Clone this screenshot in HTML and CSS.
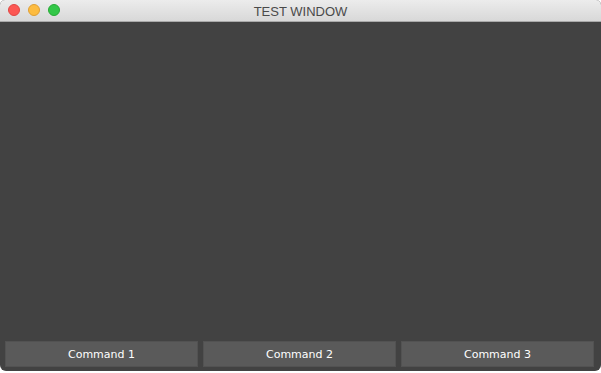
FILE: index.html
```html
<!DOCTYPE html>
<html lang="en">

<head>
    <meta charset="UTF-8">
    <meta name="viewport" content="width=device-width, initial-scale=1.0">
    <title>Test Window</title>
    <link rel="stylesheet" href="styles.css">
</head>

<body>
    <div class="window">
        <div class="titlebar">
            <div class="lights">
                <span class="light red"></span>
                <span class="light yellow"></span>
                <span class="light green"></span>
            </div>
            <div class="title">TEST WINDOW</div>
        </div>
        <div class="content"></div>
        <div class="commands">
            <button class="command">Command 1</button>
            <button class="command">Command 2</button>
            <button class="command">Command 3</button>
        </div>
    </div>
</body>

</html>
```

FILE: styles.css
```css
* {
    box-sizing: border-box;
}

body,
html {
    margin: 0;
    background-color: #ffffff;
}

.window {
    width: 601px;
    height: 371px;
    display: flex;
    flex-direction: column;
    background-color: #424242;
    border-radius: 5px 5px 6px 6px;
    overflow: hidden;
}

.titlebar {
    position: relative;
    height: 22px;
    flex: none;
    background: linear-gradient(#ececec, #d8d8d8);
    border-bottom: 1px solid #a9a9a9;
    display: flex;
    align-items: center;
    justify-content: center;
}

.lights {
    position: absolute;
    left: 8px;
    top: 4px;
    display: flex;
    gap: 8px;
}

.light {
    width: 12px;
    height: 12px;
    border-radius: 50%;
}

.red {
    background-color: #fc5753;
    border: 1px solid #df4744;
}

.yellow {
    background-color: #fdbc40;
    border: 1px solid #de9f34;
}

.green {
    background-color: #33c748;
    border: 1px solid #27aa35;
}

.title {
    font-family: "Liberation Sans", Arial, sans-serif;
    font-size: 13px;
    color: #4a4a4a;
    padding-top: 1px;
}

.content {
    flex: 1;
}

.commands {
    display: flex;
    gap: 5px;
    padding: 0 7px 4px 5px;
}

.command {
    flex: 1;
    height: 26px;
    background-color: #5a5a5a;
    border: 1px solid #525252;
    color: #ffffff;
    font-family: "DejaVu Sans", sans-serif;
    font-size: 11px;
    padding: 0;
}
```
